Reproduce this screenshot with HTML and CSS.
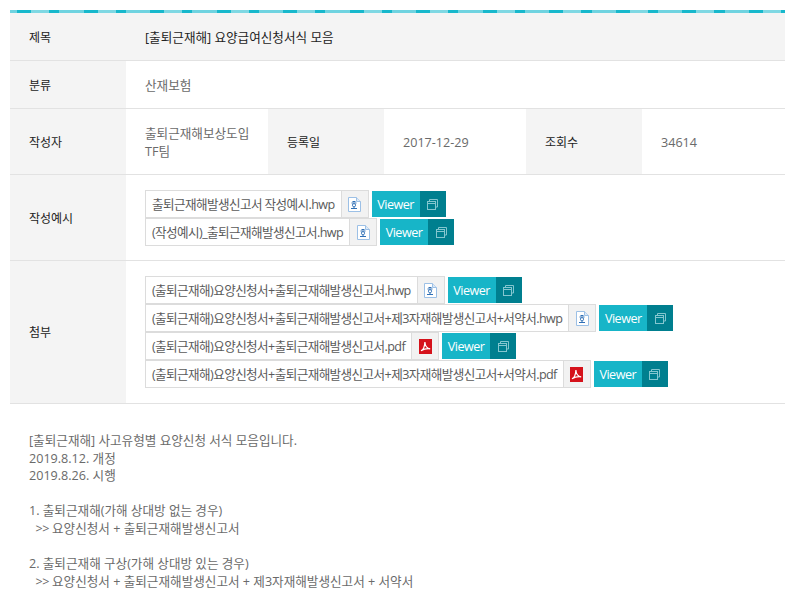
FILE: index.html
```html
<!DOCTYPE html>
<html lang="ko">
<head>
<meta charset="utf-8">
<title>요양급여신청서식 모음</title>
<link rel="stylesheet" href="styles.css">
</head>
<body>
<svg class="defs" width="0" height="0" aria-hidden="true">
  <symbol id="i-hwp" viewBox="0 0 13 15">
    <path d="M.5.5H8.5L12.5 4.5V14.5H.5Z" fill="#fff" stroke="#9cc0e6"/>
    <path d="M8.5.5V4.5H12.5" fill="#dbe8f6" stroke="#9cc0e6"/>
    <path d="M4.5 4.5H7.5M3.5 6H8.5M6 10V11.5M3 11.5H9" fill="none" stroke="#2f6fb5"/>
    <circle cx="6" cy="8.2" r="1.6" fill="none" stroke="#2f6fb5" stroke-width=".9"/>
  </symbol>
  <symbol id="i-pdf" viewBox="0 0 13 15">
    <rect width="13" height="15" fill="#d5121b"/>
    <path d="M2 11.8C4 11 5.6 7.5 5.9 3C6.2 7 8.4 9.6 11.2 9.8C8.4 9.4 4.6 10.2 2 11.8Z" fill="none" stroke="#fff" stroke-width="1.2"/>
  </symbol>
  <symbol id="i-view" viewBox="0 0 11 11">
    <path d="M2.5 2.5V.5H10.5V8H8.5" fill="none" stroke="#84c6cf"/>
    <rect x=".5" y="2.5" width="8" height="8" fill="none" stroke="#84c6cf"/>
    <path d="M1 4.5H8" stroke="#84c6cf"/>
  </symbol>
</svg>
<main class="page">
  <table class="board">
    <colgroup>
      <col class="c-h"><col class="c-d"><col class="c-h"><col class="c-d"><col class="c-h"><col>
    </colgroup>
    <tbody>
      <tr class="r-title">
        <th>제목</th>
        <td colspan="5" class="title">[출퇴근재해] 요양급여신청서식 모음</td>
      </tr>
      <tr class="r-cat">
        <th>분류</th>
        <td colspan="5">산재보험</td>
      </tr>
      <tr class="r-meta">
        <th>작성자</th>
        <td class="author">출퇴근재해보상도입 TF팀</td>
        <th>등록일</th>
        <td>2017-12-29</td>
        <th>조회수</th>
        <td>34614</td>
      </tr>
      <tr class="r-sample">
        <th>작성예시</th>
        <td colspan="5" class="files">
          <div class="file"><span class="name">출퇴근재해발생신고서 작성예시.hwp</span><span class="ico"><svg width="13" height="15"><use href="#i-hwp"/></svg></span><span class="viewer"><span class="v-label">Viewer</span><span class="v-ico"><svg width="11" height="11"><use href="#i-view"/></svg></span></span></div>
          <div class="file"><span class="name">(작성예시)_출퇴근재해발생신고서.hwp</span><span class="ico"><svg width="13" height="15"><use href="#i-hwp"/></svg></span><span class="viewer"><span class="v-label">Viewer</span><span class="v-ico"><svg width="11" height="11"><use href="#i-view"/></svg></span></span></div>
        </td>
      </tr>
      <tr>
        <th>첨부</th>
        <td colspan="5" class="files">
          <div class="file"><span class="name">(출퇴근재해)요양신청서+출퇴근재해발생신고서.hwp</span><span class="ico"><svg width="13" height="15"><use href="#i-hwp"/></svg></span><span class="viewer"><span class="v-label">Viewer</span><span class="v-ico"><svg width="11" height="11"><use href="#i-view"/></svg></span></span></div>
          <div class="file"><span class="name">(출퇴근재해)요양신청서+출퇴근재해발생신고서+제3자재해발생신고서+서약서.hwp</span><span class="ico"><svg width="13" height="15"><use href="#i-hwp"/></svg></span><span class="viewer"><span class="v-label">Viewer</span><span class="v-ico"><svg width="11" height="11"><use href="#i-view"/></svg></span></span></div>
          <div class="file"><span class="name">(출퇴근재해)요양신청서+출퇴근재해발생신고서.pdf</span><span class="ico"><svg width="13" height="15"><use href="#i-pdf"/></svg></span><span class="viewer"><span class="v-label">Viewer</span><span class="v-ico"><svg width="11" height="11"><use href="#i-view"/></svg></span></span></div>
          <div class="file"><span class="name">(출퇴근재해)요양신청서+출퇴근재해발생신고서+제3자재해발생신고서+서약서.pdf</span><span class="ico"><svg width="13" height="15"><use href="#i-pdf"/></svg></span><span class="viewer"><span class="v-label">Viewer</span><span class="v-ico"><svg width="11" height="11"><use href="#i-view"/></svg></span></span></div>
        </td>
      </tr>
    </tbody>
  </table>
  <div class="content">
    <p>[출퇴근재해] 사고유형별 요양신청 서식 모음입니다.</p>
    <p>2019.8.12. 개정</p>
    <p>2019.8.26. 시행</p>
    <p>&nbsp;</p>
    <p>1. 출퇴근재해(가해 상대방 없는 경우)</p>
    <p>&nbsp;&nbsp;<span class="arrow">&gt;&gt;</span> 요양신청서 + 출퇴근재해발생신고서</p>
    <p>&nbsp;</p>
    <p>2. 출퇴근재해 구상(가해 상대방 있는 경우)</p>
    <p>&nbsp;&nbsp;<span class="arrow">&gt;&gt;</span> 요양신청서 + 출퇴근재해발생신고서 + 제3자재해발생신고서 + 서약서</p>
  </div>
</main>
</body>
</html>
```
FILE: styles.css
```css
* { box-sizing: border-box; }
html, body { margin: 0; padding: 0; background: #fff; }
body {
  font-family: "Open Sans", "Noto Sans CJK KR", sans-serif;
  font-size: 12.6px;
  color: #6a6a6a;
  overflow: hidden;
}
.defs { position: absolute; }
.page { padding: 10px 15px 0 10px; }

.board {
  width: 775px;
  table-layout: fixed;
  border-collapse: separate;
  border-spacing: 0;
  border-top: 3px solid transparent;
  border-image: repeating-linear-gradient(90deg, #6fd3e0 0 10px, #17b8cc 10px 24px, #7fd8e3 24px 42px, #17b8cc 42px 52px, #6fd3e0 52px 66px) 3;
}
.c-h { width: 116px; }
.c-d { width: 142px; }
.board th, .board td {
  border-bottom: 1px solid #e2e2e2;
  vertical-align: middle;
  line-height: 18px;
  padding: 2px 10px 0 19px;
  text-align: left;
}
.board th {
  background: #f4f4f4;
  color: #222;
  font-size: 12px;
  font-weight: 400;
}
.r-title th, .r-title td { height: 48px; }
.board .title { background: #f4f4f4; color: #222; font-weight: 400; }
.r-cat th, .r-cat td { height: 48px; }
.r-meta th, .r-meta td { height: 66px; }
.board .files { padding: 15px 19px; }
.board .r-sample .files { padding-bottom: 14px; }

.file { display: flex; height: 28px; align-items: stretch; white-space: nowrap; }
.name {
  border: 1px solid #dcdcdc;
  border-right: 0;
  background: #fff;
  padding: 0 6px;
  line-height: 27px;
  color: #5a5a5a;
  letter-spacing: -.6px;
}
.ico {
  width: 28px;
  border: 1px solid #dcdcdc;
  background: #f2f2f2;
  display: flex;
  align-items: center;
  justify-content: center;
}
.viewer { display: flex; margin: 1px 0 1px 3px; color: #fff; }
.v-label {
  width: 48px;
  background: #17b5c8;
  text-align: center;
  line-height: 27px;
  font-weight: 500;
  letter-spacing: -.5px;
}
.v-ico {
  width: 26px;
  background: #007f8f;
  display: flex;
  align-items: center;
  justify-content: center;
}

.content { padding: 28px 19px 0; }
.content p { margin: 0; line-height: 17.6px; white-space: nowrap; }
.arrow { letter-spacing: -.6px; }
```
